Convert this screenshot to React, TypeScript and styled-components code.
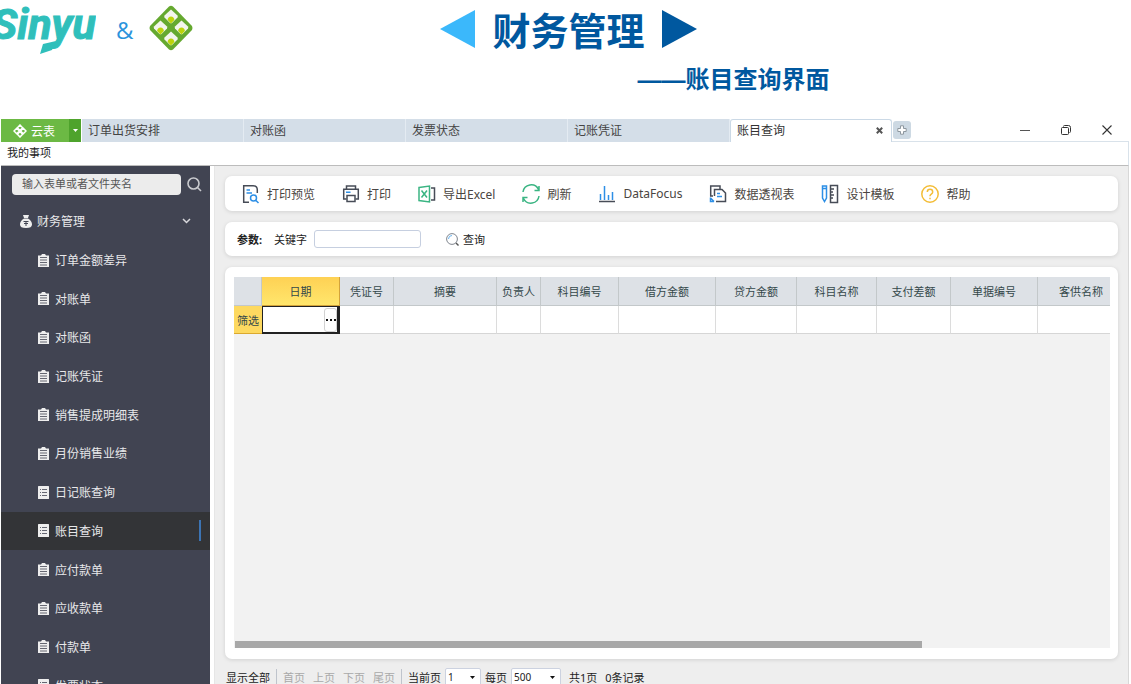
import React from "react";
import styled, { createGlobalStyle, css } from "styled-components";

const GlobalStyle = createGlobalStyle`
  * { box-sizing: border-box; }
  body {
    margin: 0;
    background: #fff;
    font-family: "Noto Sans", "Noto Sans CJK SC", sans-serif;
    font-size: 11px;
    color: #222;
  }
  button, input, select { font: inherit; color: inherit; }
  button { border: 0; padding: 0; background: none; cursor: pointer; white-space: nowrap; }
  svg { display: block; flex: none; }
`;

const Page = styled.div`
  display: flex;
  flex-direction: column;
  height: 100vh;
  overflow: hidden;
`;

/* ---------- banner ---------- */

const Banner = styled.header`
  display: grid;
  grid-template-columns: 1fr auto 1fr;
  grid-template-rows: 64px 55px;
  flex: none;
  overflow: hidden;
`;

const Brands = styled.div`
  display: flex;
  align-items: center;
  height: 56px;
`;

const Wordmark = styled.span`
  position: relative;
  width: 96px;
  height: 56px;
  overflow: hidden;
  color: #2fbfbb;
  font: italic 700 43px/48px Roboto, sans-serif;
  -webkit-text-stroke: 1px #2fbfbb;
  display: flex;
  justify-content: flex-end;

  svg { position: absolute; left: 39px; top: 41px; }
`;

const Ampersand = styled.span`
  margin: 4px 16px 0 20px;
  color: #2b93dc;
  font: 24px/32px "Open Sans", sans-serif;
`;

const Title = styled.h1`
  display: flex;
  align-items: center;
  gap: 17px;
  height: 58px;
  margin: 0 0 0 6px;
  color: #00589f;
  font: 700 38px/56px "Noto Sans CJK SC", sans-serif;
`;

const Subtitle = styled.h2`
  grid-column: 1 / -1;
  margin: 0;
  padding-left: calc(50% + 72px);
  color: #00589f;
  font: 700 24px/28px "Noto Sans CJK SC", sans-serif;
  white-space: nowrap;
`;

const Dash = styled.span`
  font-family: "Liberation Sans", sans-serif;
`;

/* ---------- window chrome ---------- */

const Window = styled.main`
  display: flex;
  flex-direction: column;
  flex: 1;
  min-height: 0;
  margin: 0 2px 0 1px;
`;

const TabStrip = styled.div`
  display: flex;
  flex: none;
  height: 23px;
  font-size: 12px;
`;

const AppButton = styled.button`
  display: flex;
  align-items: center;
  gap: 4px;
  width: 68px;
  padding-left: 12px;
  background: #6cb944;
  color: #fff;
`;

const AppMenu = styled.button`
  display: flex;
  align-items: center;
  justify-content: center;
  width: 12px;
  margin-right: 1px;
  background: #4ea32c;
`;

const Tab = styled.button<{ $active?: boolean }>`
  display: flex;
  align-items: center;
  justify-content: space-between;
  flex: 0 1 162px;
  padding: 0 8px 2px 6px;
  border-right: 1px solid #e4ebf2;
  background: #d4dee8;
  color: #444;
  ${(p) =>
    p.$active &&
    css`
      background: #fff;
      border: 1px solid #cbd9e6;
      border-bottom: 0;
      border-radius: 3px 3px 0 0;
      color: #333;
    `}
`;

const TabFill = styled.div`
  display: flex;
  flex: 1;
  align-items: center;
  padding-right: 2px;
  border-bottom: 1px solid #d9e2ea;
`;

const NewTab = styled.button`
  display: grid;
  place-items: center;
  width: 18px;
  height: 18px;
  margin: 0 auto 0 1px;
  border-radius: 3px;
  background: #cdd9e3;
`;

const WindowButton = styled.button`
  display: grid;
  place-items: center;
  width: 41px;
  height: 22px;
`;

const MenuBar = styled.div`
  display: flex;
  flex: none;
  align-items: center;
  height: 24px;
  padding: 0 6px 3px;
  border-right: 1px solid #d9e2ea;
  border-bottom: 1px solid #bcbcbc;
`;

const Body = styled.div`
  display: flex;
  flex: 1;
  min-height: 0;
`;

/* ---------- sidebar ---------- */

const Sidebar = styled.nav`
  width: 209px;
  flex: none;
  overflow: hidden;
  background: #414452;
  color: #e8e8ea;
  font-size: 12px;
`;

const SearchRow = styled.form`
  display: flex;
  align-items: center;
  gap: 6px;
  height: 36px;
  padding: 0 8px 0 11px;
`;

const SearchInput = styled.input`
  flex: 1;
  min-width: 0;
  height: 21px;
  padding: 0 10px 2px;
  border: 0;
  border-radius: 4px;
  background: #ececec;
  font-size: 11px;
  color: #444;
  &::placeholder { color: #555; opacity: 1; }
`;

const NavList = styled.ul`
  display: grid;
  grid-auto-rows: 1fr;
  height: 503px;
  margin: 0;
  padding: 0;
  list-style: none;
`;

const NavGroup = styled.button`
  display: flex;
  align-items: center;
  gap: 5px;
  width: 100%;
  height: 100%;
  padding: 0 19px;
  svg:last-child { margin-left: auto; }
`;

const NavLink = styled.a<{ $active?: boolean }>`
  display: flex;
  align-items: center;
  justify-content: space-between;
  height: 100%;
  padding: 0 9px 0 37px;
  color: inherit;
  text-decoration: none;
  background: ${(p) => (p.$active ? "#333437" : "transparent")};
`;

const NavLabel = styled.span`
  display: flex;
  align-items: center;
  gap: 6px;
`;

const ActiveMark = styled.span`
  width: 2px;
  height: 21px;
  background: #3c74b4;
`;

/* ---------- content ---------- */

const Content = styled.section`
  display: flex;
  flex: 1;
  flex-direction: column;
  gap: 11px;
  min-width: 0;
  margin-left: 4px;
  padding: 10px 10px 0;
  border-left: 1px solid #e6e6e6;
  border-right: 1px solid #d8d8d8;
  background: #eeeeee;
`;

const Card = styled.div`
  flex: none;
  border-radius: 7px;
  background: #fff;
  box-shadow: 0 1px 4px rgba(0, 0, 0, 0.12);
`;

const Toolbar = styled(Card)`
  display: flex;
  align-items: center;
  gap: 27px;
  height: 35px;
  padding: 0 17px;
  overflow: hidden;
  color: #4a4541;
  font-size: 12px;
`;

const ToolButton = styled.button`
  display: flex;
  align-items: center;
  gap: 7px;
`;

const Params = styled(Card)`
  display: flex;
  align-items: center;
  height: 34px;
  padding: 0 12px;
`;

const ParamsTitle = styled.strong`
  margin-right: 12px;
`;

const KeywordInput = styled.input`
  width: 107px;
  height: 18px;
  margin: 0 25px 0 7px;
  padding: 0 4px;
  border: 1px solid #c6cfe0;
  border-radius: 3px;
  background: #fff;
`;

const QueryButton = styled.button`
  display: flex;
  align-items: center;
  gap: 4px;
`;

const GridCard = styled(Card)`
  display: flex;
  flex: 1;
  min-height: 0;
  padding: 10px 8px 11px 9px;
`;

const GridView = styled.div`
  display: flex;
  flex: 1;
  flex-direction: column;
  justify-content: space-between;
  min-width: 0;
  overflow: hidden;
  background: #f2f2f2;
`;

const Table = styled.table`
  width: 891px;
  border-collapse: separate;
  border-spacing: 0;
  table-layout: fixed;
  color: #34484a;
`;

const HeadCell = styled.th<{ $selected?: boolean }>`
  height: 29px;
  padding: 0;
  border-right: 1px solid #c3c8ca;
  border-bottom: 1px solid #c3c8ca;
  background: #dde1e6;
  font-weight: 400;
  ${(p) =>
    p.$selected &&
    css`
      background: linear-gradient(#fed154, #ffe66c);
      border-color: #d3a33a;
    `}
`;

const RowHead = styled.th`
  height: 28px;
  padding: 0;
  border-bottom: 1px solid #dba92f;
  background: #fdd960;
  font-weight: 400;
`;

const FilterCell = styled.td<{ $selected?: boolean }>`
  height: 28px;
  padding: 0;
  border-right: 1px solid #dcdcdc;
  border-bottom: 1px solid #d6d6d6;
  background: #fff;
  ${(p) =>
    p.$selected &&
    css`
      border: 2px solid #222;
      border-width: 1px 3px 2px 1px;
    `}
`;

const CellEditor = styled.div`
  display: flex;
  justify-content: flex-end;
`;

const MoreButton = styled.button`
  display: grid;
  place-items: center;
  width: 13px;
  height: 24px;
  border: 1px solid #d2d2d2;
  border-radius: 3px;
  background: #fff;
`;

const ScrollThumb = styled.div`
  width: 687px;
  max-width: 79%;
  height: 7px;
  margin-left: 1px;
  background: #a8a8a8;
`;

const Pager = styled.footer`
  display: flex;
  flex: none;
  align-items: center;
  height: 18px;
  margin-top: -2px;
  margin-bottom: -2px;
  padding-left: 1px;
  white-space: nowrap;
`;

const PagerLinks = styled.div`
  display: flex;
  gap: 8px;
  margin: 0 6px;
  padding: 0 6px;
  border-left: 1px solid #bfc4cc;
  border-right: 1px solid #bfc4cc;

  button { color: #a9a9a9; }
`;

const PagerLabel = styled.label`
  display: flex;
  align-items: center;
  gap: 4px;
  margin-right: 4px;
`;

const SelectBox = styled.span<{ $wide?: boolean }>`
  position: relative;
  width: ${(p) => (p.$wide ? 50 : 36)}px;

  svg { position: absolute; right: 6px; top: 8px; pointer-events: none; }
`;

const Select = styled.select`
  display: block;
  width: 100%;
  height: 18px;
  padding: 0 2px;
  appearance: none;
  border: 1px solid #ccd2e0;
  border-radius: 2px;
  background: #fff;
  font-size: 10px;
`;

const Summary = styled.span`
  margin: 0 4px;
`;

/* ---------- drawings ---------- */

const Leaf = () => (
  <svg width="18" height="13" viewBox="0 0 18 13">
    <path d="M4 3 17 0 13 9 1 13Z" fill="#2fbfbb" />
  </svg>
);

const YunbiaoLogo = () => (
  <svg width="44" height="46" viewBox="0 0 44 46">
    <path d="M20 1.5Q22 0 24 1.5L43 21Q44 23 43 25L24 44.5Q22 46 20 44.5L1 25Q0 23 1 21Z" fill="#65a92f" />
    {[
      [22, 11.5],
      [11.5, 22.5],
      [32.5, 22.5],
      [22, 33.5],
    ].map(([x, y]) => (
      <g key={`${x}-${y}`} transform={`translate(${x} ${y})`}>
        <path d="M0-7 6.5-1Q7 0 6.5 1L1 6.5Q0 7-1 6.5L-6.5 1Q-7 0-6.5-1Z" fill="#f3f5ec" />
        <path d="M0 0Q3 0 3.4 3.5L0 7-3.4 3.5Q-3 0 0 0Z" fill="#bcd40b" />
      </g>
    ))}
  </svg>
);

const Triangle = ({ flip, color }: { flip?: boolean; color: string }) => (
  <svg width="35" height="38" viewBox="0 0 35 38">
    <path d={flip ? "M35 0V38L0 19Z" : "M0 0 35 19 0 38Z"} fill={color} />
  </svg>
);

const AppMark = () => (
  <svg width="14" height="14" viewBox="0 0 14 14" fill="none" stroke="#fff" strokeWidth="1.5">
    <path d="M7 1 9.6 3.7 7 6.4 4.4 3.7ZM3.7 4.3 6.4 7 3.7 9.7 1 7ZM10.3 4.3 13 7 10.3 9.7 7.6 7ZM7 7.6 9.6 10.3 7 13 4.4 10.3Z" />
  </svg>
);

const Caret = ({ color = "#111" }: { color?: string }) => (
  <svg width="5" height="3" viewBox="0 0 5 3">
    <path d="M0 0H5L2.5 3Z" fill={color} />
  </svg>
);

const TabClose = () => (
  <svg width="7" height="7" viewBox="0 0 7 7" stroke="#555" strokeWidth="2">
    <path d="M.8.8 6.2 6.2M6.2.8.8 6.2" />
  </svg>
);

const PlusOutline = () => (
  <svg width="10" height="10" viewBox="0 0 10 10" fill="#fff" stroke="#8d979f">
    <path d="M3.5.8H6.5V3.5H9.2V6.5H6.5V9.2H3.5V6.5H.8V3.5H3.5Z" />
  </svg>
);

const Minimize = () => (
  <svg width="10" height="10" viewBox="0 0 10 10" stroke="#555">
    <path d="M0 5.5H10" />
  </svg>
);

const Restore = () => (
  <svg width="10" height="10" viewBox="0 0 10 10" fill="none" stroke="#333">
    <rect x=".5" y="2.5" width="7" height="7" rx="1" />
    <path d="M2.5 1.5Q2.5.5 3.5.5H7.5Q9.5.5 9.5 2.5V6.5Q9.5 7.5 8.5 7.5" />
  </svg>
);

const Close = () => (
  <svg width="10" height="10" viewBox="0 0 10 10" stroke="#333" strokeWidth="1.1">
    <path d="M.5.5 9.5 9.5M9.5.5.5 9.5" />
  </svg>
);

const SearchIcon = () => (
  <svg width="15" height="15" viewBox="0 0 15 15" fill="none" stroke="#c9cace" strokeWidth="1.6">
    <circle cx="6.5" cy="6.5" r="5.5" />
    <path d="M10.5 10.5 14 14" />
  </svg>
);

const MoneyBag = () => (
  <svg width="12" height="13" viewBox="0 0 12 13">
    <path d="M3 0H9L8 3H4Z" fill="#eee" />
    <path d="M4 3.6H8Q12 6 12 9.5 12 13 6 13 0 13 0 9.5 0 6 4 3.6Z" fill="#eee" />
    <path d="M3.5 6.5H8.5M6 6.5V11M4 8.5H8" stroke="#414452" fill="none" />
  </svg>
);

const Chevron = () => (
  <svg width="9" height="6" viewBox="0 0 9 6" fill="none" stroke="#d8d8dc" strokeWidth="1.5">
    <path d="M1 1 4.5 4.5 8 1" />
  </svg>
);

const Clipboard = () => (
  <svg width="11" height="13" viewBox="0 0 11 13">
    <path d="M0 1.5H3L4 0H7L8 1.5H11V13H0Z" fill="#eee" />
    <path d="M2 3.5H9M2 6H9M2 8.5H9M2 11H9" stroke="#414452" strokeWidth=".8" />
  </svg>
);

const ListSheet = () => (
  <svg width="11" height="13" viewBox="0 0 11 13">
    <rect width="11" height="13" rx=".5" fill="#eee" />
    <path d="M2 3.5H3M4 3.5H9M2 6.5H3M4 6.5H9M2 9.5H3M4 9.5H9" stroke="#414452" strokeWidth=".8" />
  </svg>
);

const ToolSvg = styled.svg.attrs({ width: 18, height: 20, viewBox: "0 0 18 20", fill: "none" })`
  stroke-width: 1.5;
`;

const PreviewIcon = () => (
  <ToolSvg>
    <path d="M7 18.3H1.7V1.7H11Q15.3 1.7 15.3 6V9" stroke="#474c57" />
    <path d="M4.5 6H8M4.5 9H10M14 16.5 16.5 19" stroke="#2d8fe6" />
    <circle cx="11.5" cy="14" r="3" stroke="#2d8fe6" />
  </ToolSvg>
);

const PrintIcon = () => (
  <ToolSvg stroke="#474c57">
    <path d="M4.5 5V2H13.5V5M4.5 15H1.7V5.3H16.3V15H13.5" />
    <path d="M5 11.5H13V17.5H5Z" />
    <path d="M4 8.3H8.5" stroke="#2d8fe6" />
  </ToolSvg>
);

const ExcelIcon = () => (
  <ToolSvg stroke="#3bb583">
    <path d="M1 3.5 11.5 2V18L1 16.5Z" />
    <path d="M3.5 6.5 9 13.5M9 6.5 3.5 13.5" />
    <path d="M13 4H16.5V16H13" stroke="#474c57" />
  </ToolSvg>
);

const RefreshIcon = () => (
  <ToolSvg stroke="#3bb583">
    <path d="M1 8A8.2 8.2 0 0 1 16.5 5.5M17 2V6.5H12.5M17 12A8.2 8.2 0 0 1 1.5 14.5M1 18V13.5H5.5" />
  </ToolSvg>
);

const ChartIcon = () => (
  <ToolSvg stroke="#2d8fe6">
    <path d="M2.5 16V10M6.5 16V2M10.5 16V11M14.5 16V8" />
    <path d="M1 17.5H17" stroke="#474c57" />
  </ToolSvg>
);

const PivotIcon = () => (
  <ToolSvg stroke="#474c57">
    <path d="M5.5 12V5.5H13L16.5 9V17.5H7" />
    <path d="M4 12H1.7V2H11V5" />
    <path d="M8 9.5H11M8 12.5H13M1.5 13.5V17.5H5M1.5 14 5 17.5" stroke="#2d8fe6" />
  </ToolSvg>
);

const DesignIcon = () => (
  <ToolSvg>
    <path d="M1.5 2H5.5V14L3.5 17.5 1.5 14ZM1.5 4.5H5.5" stroke="#2d8fe6" />
    <path d="M9.5 1.5H16.5V18.5H9.5ZM10 5H13M10 8H12M10 11H13M10 14H12" stroke="#474c57" />
  </ToolSvg>
);

const HelpIcon = () => (
  <ToolSvg stroke="#f3bd38">
    <circle cx="9" cy="10" r="8.2" />
    <path d="M6.3 8Q6.3 5.3 9 5.3T11.7 8Q11.7 9.3 10.3 10.2T9 12.3M9 13.7V15.2" />
  </ToolSvg>
);

const QueryIcon = () => (
  <svg width="13" height="13" viewBox="0 0 13 13" fill="none">
    <circle cx="6" cy="6" r="5.4" stroke="#7f858e" />
    <path d="M2.5 6A3.5 3.5 0 0 1 6 2.5" stroke="#67b2f0" />
    <path d="M10 10 12.5 12.5" stroke="#555" strokeWidth="1.4" />
  </svg>
);

const Dots = () => (
  <svg width="10" height="2" viewBox="0 0 10 2" fill="#111">
    <path d="M0 0H2V2H0ZM4 0H6V2H4ZM8 0H10V2H8Z" />
  </svg>
);

/* ---------- data ---------- */

const openTabs = ["订单出货安排", "对账函", "发票状态", "记账凭证"];

const navItems: { label: string; sheet?: boolean }[] = [
  { label: "订单金额差异" },
  { label: "对账单" },
  { label: "对账函" },
  { label: "记账凭证" },
  { label: "销售提成明细表" },
  { label: "月份销售业绩" },
  { label: "日记账查询", sheet: true },
  { label: "账目查询", sheet: true },
  { label: "应付款单" },
  { label: "应收款单" },
  { label: "付款单" },
  { label: "发票状态", sheet: true },
];

const tools: [string, React.ComponentType][] = [
  ["打印预览", PreviewIcon],
  ["打印", PrintIcon],
  ["导出Excel", ExcelIcon],
  ["刷新", RefreshIcon],
  ["DataFocus", ChartIcon],
  ["数据透视表", PivotIcon],
  ["设计模板", DesignIcon],
  ["帮助", HelpIcon],
];

const columns: [string, number][] = [
  ["日期", 78],
  ["凭证号", 54],
  ["摘要", 103],
  ["负责人", 44],
  ["科目编号", 78],
  ["借方金额", 97],
  ["贷方金额", 81],
  ["科目名称", 80],
  ["支付差额", 74],
  ["单据编号", 87],
  ["客供名称", 87],
];

const activeItem = "账目查询";
const selectedColumn = "日期";

export default function App() {
  return (
    <Page>
      <GlobalStyle />
      <Banner>
        <Brands>
          <Wordmark>
            Sinyu
            <Leaf />
          </Wordmark>
          <Ampersand>&amp;</Ampersand>
          <YunbiaoLogo />
        </Brands>
        <Title>
          <Triangle flip color="#3bb8fb" />
          财务管理
          <Triangle color="#00589f" />
        </Title>
        <Subtitle>
          <Dash>——</Dash>账目查询界面
        </Subtitle>
      </Banner>

      <Window>
        <TabStrip>
          <AppButton>
            <AppMark />
            云表
          </AppButton>
          <AppMenu aria-label="菜单">
            <Caret color="#fff" />
          </AppMenu>
          {openTabs.map((t) => (
            <Tab key={t}>{t}</Tab>
          ))}
          <Tab $active>
            账目查询
            <TabClose />
          </Tab>
          <TabFill>
            <NewTab aria-label="新建标签">
              <PlusOutline />
            </NewTab>
            <WindowButton aria-label="最小化">
              <Minimize />
            </WindowButton>
            <WindowButton aria-label="还原">
              <Restore />
            </WindowButton>
            <WindowButton aria-label="关闭">
              <Close />
            </WindowButton>
          </TabFill>
        </TabStrip>
        <MenuBar>
          <button>我的事项</button>
        </MenuBar>

        <Body>
          <Sidebar>
            <SearchRow>
              <SearchInput aria-label="搜索" placeholder="输入表单或者文件夹名" />
              <button type="button" aria-label="搜索">
                <SearchIcon />
              </button>
            </SearchRow>
            <NavList>
              <li>
                <NavGroup>
                  <MoneyBag />
                  财务管理
                  <Chevron />
                </NavGroup>
              </li>
              {navItems.map(({ label, sheet }) => (
                <li key={label}>
                  <NavLink href="#" $active={label === activeItem}>
                    <NavLabel>
                      {sheet ? <ListSheet /> : <Clipboard />}
                      {label}
                    </NavLabel>
                    {label === activeItem && <ActiveMark />}
                  </NavLink>
                </li>
              ))}
            </NavList>
          </Sidebar>

          <Content>
            <Toolbar>
              {tools.map(([label, Icon]) => (
                <ToolButton key={label}>
                  <Icon />
                  {label}
                </ToolButton>
              ))}
            </Toolbar>

            <Params>
              <ParamsTitle>参数:</ParamsTitle>
              <label htmlFor="keyword">关键字</label>
              <KeywordInput id="keyword" />
              <QueryButton>
                <QueryIcon />
                查询
              </QueryButton>
            </Params>

            <GridCard>
              <GridView>
                <Table>
                  <colgroup>
                    <col width={28} />
                    {columns.map(([name, width]) => (
                      <col key={name} width={width} />
                    ))}
                  </colgroup>
                  <thead>
                    <tr>
                      <HeadCell />
                      {columns.map(([name]) => (
                        <HeadCell key={name} $selected={name === selectedColumn}>
                          {name}
                        </HeadCell>
                      ))}
                    </tr>
                  </thead>
                  <tbody>
                    <tr>
                      <RowHead>筛选</RowHead>
                      {columns.map(([name]) => (
                        <FilterCell key={name} $selected={name === selectedColumn}>
                          {name === selectedColumn && (
                            <CellEditor>
                              <MoreButton aria-label="更多">
                                <Dots />
                              </MoreButton>
                            </CellEditor>
                          )}
                        </FilterCell>
                      ))}
                    </tr>
                  </tbody>
                </Table>
                <ScrollThumb />
              </GridView>
            </GridCard>

            <Pager>
              <button>显示全部</button>
              <PagerLinks>
                <button disabled>首页</button>
                <button disabled>上页</button>
                <button disabled>下页</button>
                <button disabled>尾页</button>
              </PagerLinks>
              <PagerLabel>
                当前页
                <SelectBox>
                  <Select defaultValue="1">
                    <option>1</option>
                  </Select>
                  <Caret />
                </SelectBox>
              </PagerLabel>
              <PagerLabel>
                每页
                <SelectBox $wide>
                  <Select defaultValue="500">
                    <option>500</option>
                  </Select>
                  <Caret />
                </SelectBox>
              </PagerLabel>
              <Summary>共1页</Summary>
              <Summary>0条记录</Summary>
            </Pager>
          </Content>
        </Body>
      </Window>
    </Page>
  );
}
